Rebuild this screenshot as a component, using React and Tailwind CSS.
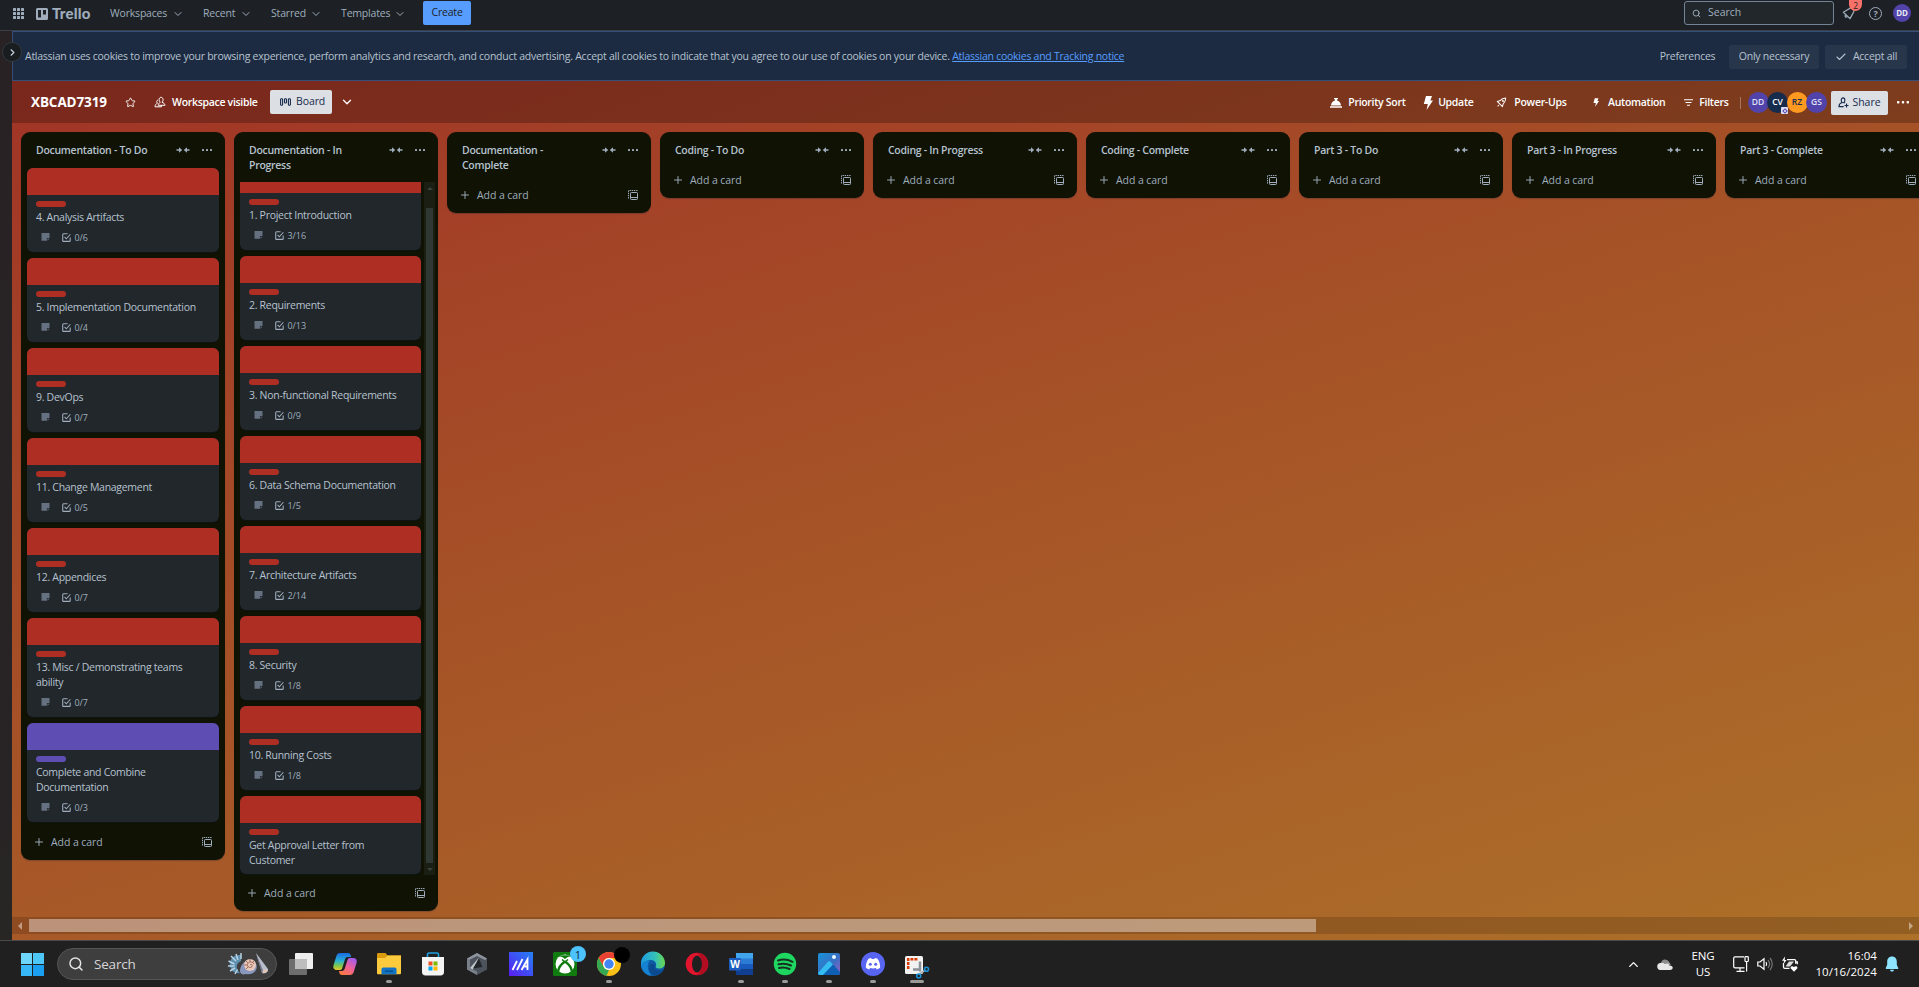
import React from "react";
import { ChevronDown, ChevronRight, ChevronUp, Search, Star, Plus, Check } from "lucide-react";

const LISTS = [
  {
    title: "Documentation - To Do",
    cards: [
      { title: "4. Analysis Artifacts", checks: "0/6" },
      { title: "5. Implementation Documentation", checks: "0/4" },
      { title: "9. DevOps", checks: "0/7" },
      { title: "11. Change Management", checks: "0/5" },
      { title: "12. Appendices", checks: "0/7" },
      { title: "13. Misc / Demonstrating teams ability", checks: "0/7" },
      { title: "Complete and Combine Documentation", checks: "0/3", purple: true },
    ],
  },
  {
    title: "Documentation - In Progress",
    scroll: true,
    cards: [
      { title: "1. Project Introduction", checks: "3/16" },
      { title: "2. Requirements", checks: "0/13" },
      { title: "3. Non-functional Requirements", checks: "0/9" },
      { title: "6. Data Schema Documentation", checks: "1/5" },
      { title: "7. Architecture Artifacts", checks: "2/14" },
      { title: "8. Security", checks: "1/8" },
      { title: "10. Running Costs", checks: "1/8" },
      { title: "Get Approval Letter from Customer" },
    ],
  },
  { title: "Documentation - Complete" },
  { title: "Coding - To Do" },
  { title: "Coding - In Progress" },
  { title: "Coding - Complete" },
  { title: "Part 3 - To Do" },
  { title: "Part 3 - In Progress" },
  { title: "Part 3 - Complete" },
];

/* ---------- small icons ---------- */

const CollapseIcon = () => (
  <svg viewBox="0 0 14 8" className="h-2 w-3.5 shrink-0" fill="none" stroke="currentColor" strokeWidth="1.4">
    <path d="M0.5 4H5M9 4h4.5" />
    <path d="M3 1.3 6.2 4 3 6.7ZM11 1.3 7.8 4 11 6.7Z" fill="currentColor" stroke="none" />
  </svg>
);

const Dots = ({ className }) => (
  <svg viewBox="0 0 10 2" className={className} fill="currentColor">
    <rect x="0" y="0" width="2" height="2" rx="0.6" />
    <rect x="4" y="0" width="2" height="2" rx="0.6" />
    <rect x="8" y="0" width="2" height="2" rx="0.6" />
  </svg>
);

const TemplateIcon = () => (
  <svg viewBox="0 0 10 10" className="size-2.5 shrink-0" fill="none" stroke="currentColor">
    <path d="M0.5 0.5v8.5M1.5 0.5h8" strokeDasharray="1.4 0.8" strokeWidth="1" />
    <rect x="2.5" y="2.5" width="7" height="7" rx="0.8" strokeWidth="1" />
    <path d="M3 7.5h6" strokeWidth="1" />
  </svg>
);

const ChecklistIcon = () => (
  <svg viewBox="0 0 10 10" className="size-[9px] shrink-0" fill="none" stroke="currentColor" strokeWidth="1.2">
    <path d="M6.2 0.9H1.6a.8.8 0 0 0-.8.8v6.8a.8.8 0 0 0 .8.8h6.7a.8.8 0 0 0 .8-.8V5" />
    <path d="M2.8 4.3 4.8 6.4 9.3 1.4" />
  </svg>
);

const DescriptionIcon = () => (
  <svg viewBox="0 0 10 9" className="h-[8px] w-[9px] shrink-0 text-[#657180]" fill="currentColor">
    <path d="M0.5 0h9v5.6H6.6V8.6H0.5Z" />
    <path d="M7.3 6.4h2.2L7.3 8.6Z" />
  </svg>
);

const RocketIcon = ({ className }) => (
  <svg viewBox="0 0 12 12" className={className} fill="none" stroke="currentColor" strokeWidth="1.1" strokeLinejoin="round">
    <path d="M10.6 1.2C8 1.3 5.6 2.6 4.1 4.2L1.3 4.8 7 10.6l.8-2.9c1.6-1.5 2.8-3.9 2.8-6.5Z" />
    <path d="M3.2 8.7 1.8 10.2" />
    <circle cx="7.6" cy="4.3" r="0.5" />
  </svg>
);

const BellIcon = () => (
  <svg viewBox="0 0 14 14" className="size-3.5" fill="none" stroke="currentColor" strokeWidth="1.3" strokeLinejoin="round">
    <path d="M1.4 6.3 8 2.2c2-1 4.6 1.4 3.8 3.6L8 12.6Z" />
    <path d="M3.7 8.6c-1.6 1.8.3 3.4 1.8 1.8" />
  </svg>
);

const BoltIcon = ({ className }) => (
  <svg viewBox="0 0 10 14" className={className} fill="currentColor">
    <path d="M3 0H9L7.4 4.6H10L3.6 14 4.8 8H0.8Z" />
  </svg>
);

const PeopleIcon = ({ className }) => (
  <svg viewBox="0 0 12 12" className={className} fill="none" stroke="currentColor" strokeWidth="1" strokeLinejoin="round">
    <path d="M7 1.300c2.600 0 2.600 4 .9 4.900C9.800 6.900 10.800 7.800 11 9.300H4.200c.2-1.500.9-2.400 2.100-3.100C4.600 5.200 4.600 1.300 7 1.300Z" />
    <path d="M3.800 4C2.400 4.500 2.500 6.500 3.500 7.200 1.900 7.800 1 9 1 10.800h6.500V9.500" />
  </svg>
);

const ShareIcon = () => (
  <svg viewBox="0 0 12 12" className="size-[11px]" fill="none" stroke="currentColor" strokeWidth="1.200">
    <ellipse cx="5.500" cy="3.600" rx="2" ry="2.600" />
    <path d="M4.400 6C2 6.800 1 8.200 1 10.500h5.200M6.600 6l1 .6M9.300 7v4.400M7.100 9.200h4.400" />
  </svg>
);

/* ---------- top navigation ---------- */

const NavItem = ({ label, className }) => (
  <button className={`flex shrink-0 items-center justify-between ${className}`}>
    <span>{label}</span>
    <ChevronDown className="size-3" strokeWidth={2} />
  </button>
);

function TopNav() {
  return (
    <header className="flex h-[31px] shrink-0 items-start border-b border-[#3a4046] bg-[#1d2125] text-[10.500px] font-medium tracking-[-0.200px] text-[#9fadbc]">
      <div className="flex h-[27px] flex-1 items-center pl-[13px]">
        <div className="grid grid-cols-3 gap-[1.500px]">
          {Array.from({ length: 9 }, (_, i) => (
            <i key={i} className="size-[2.700px] rounded-[0.500px] bg-[#9fadbc]" />
          ))}
        </div>
        <div className="ml-3 flex w-[74px] items-center gap-1 font-['Lato']">
          <svg viewBox="0 0 12 12" className="size-3">
            <path fillRule="evenodd" fill="#9fadbc" d="M1.500 0h9A1.500 1.500 0 0 1 12 1.500v9a1.500 1.500 0 0 1-1.500 1.500h-9A1.500 1.500 0 0 1 0 10.500v-9A1.500 1.500 0 0 1 1.500 0ZM2 2v7.500h3V2ZM7 2v4.500h3V2Z" />
          </svg>
          <b className="text-[15px] leading-none font-black tracking-[0.200px]">Trello</b>
        </div>
        <NavItem label="Workspaces" className="w-[74px]" />
        <NavItem label="Recent" className="ml-[19px] w-[49px]" />
        <NavItem label="Starred" className="ml-[19px] w-[51px]" />
        <NavItem label="Templates" className="ml-[19px] w-[65px]" />
        <button className="ml-[17px] mt-[-1px] h-6 w-12 rounded-[2px] bg-[#579dff] text-[#1d2125]">Create</button>
      </div>
      <div className="mt-px flex h-6 w-[150px] items-center rounded-[3px] border border-[#738496] bg-[#22272b] pl-[7px]">
        <Search className="size-[9px]" strokeWidth={2.500} />
        <span className="ml-[7px] font-normal tracking-normal">Search</span>
      </div>
      <div className="relative ml-2 mt-[6px] size-3.5">
        <BellIcon />
        <span className="absolute -top-[6px] left-[7px] flex h-[11px] w-[13px] items-center justify-center rounded-b-full rounded-t-[5px] bg-[#f87168] text-[8.500px] leading-[10px] font-normal text-[#1d2125]">2</span>
      </div>
      <span className="ml-[13px] mt-[7px] flex size-[13px] items-center justify-center rounded-full border-[1.300px] border-[#9fadbc] text-[9px] font-bold">?</span>
      <span className="ml-[11px] mr-2 mt-1 flex size-[18px] items-center justify-center rounded-full bg-[#5243aa] text-[8px] font-bold text-[#e6e9f5]">DD</span>
    </header>
  );
}

/* ---------- cookie banner ---------- */

function CookieBanner() {
  return (
    <div className="flex h-[50px] shrink-0 items-center border border-r-0 border-[#34507a] bg-[#1c2b41] pl-3 pr-3 text-[10.500px] text-[#b6c2cf]">
      <p className="flex-1 pt-[2px] tracking-[-0.255px] whitespace-nowrap">
        Atlassian uses cookies to improve your browsing experience, perform analytics and research, and conduct advertising. Accept all cookies to indicate that you agree to our use of cookies on your device.{" "}
        <a className="text-[#579dff] underline">Atlassian cookies and Tracking notice</a>
      </p>
      <div className="flex items-center pt-px font-medium tracking-[-0.250px]">
        <button className="w-[57px] text-center">Preferences</button>
        <button className="ml-[13px] h-6 w-[90px] rounded-[2px] bg-[#28364c]">Only necessary</button>
        <button className="ml-1.5 flex h-6 w-[82px] items-center justify-center gap-[6px] rounded-[2px] bg-[#28364c]">
          <Check className="size-3" strokeWidth={2.200} />
          Accept all
        </button>
      </div>
    </div>
  );
}

/* ---------- board header ---------- */

const Member = ({ children, className }) => (
  <span className={`relative flex h-[21px] w-[21px] items-center justify-center rounded-full text-[8.500px] font-semibold ${className}`}>
    {children}
  </span>
);

const HeaderAction = ({ icon, label, className }) => (
  <button className={`flex shrink-0 items-center justify-between ${className}`}>
    {icon}
    <span>{label}</span>
  </button>
);

function BoardHeader() {
  return (
    <div className="flex h-[42px] shrink-0 items-center bg-black/24 pl-[19px] text-[10.500px] font-semibold tracking-[-0.300px] whitespace-nowrap text-white">
      <h1 className="w-[94px] text-[13.500px] font-bold tracking-[-0.100px]">XBCAD7319</h1>
      <Star className="size-[11px]" strokeWidth={2} />
      <PeopleIcon className="ml-[18px] mr-1.5 size-3" />
      <span className="w-[98px] pt-px">Workspace visible</span>
      <button className="flex h-6 w-[62px] items-center rounded-[2px] bg-[#dcdfe4] pl-2.5 font-normal tracking-[-0.100px] text-[#172b4d]">
        <svg viewBox="0 0 11 9" className="mr-[5px] h-[9px] w-[11px]" fill="none" stroke="currentColor" strokeWidth="1.100">
          <rect x="0.600" y="0.700" width="2" height="6.600" rx="0.800" />
          <rect x="4.500" y="0.700" width="2" height="4.300" rx="0.800" />
          <rect x="8.400" y="0.700" width="2" height="6.600" rx="0.800" />
        </svg>
        Board
      </button>
      <ChevronDown className="ml-[8px] size-3.5" strokeWidth={2.200} />

      <div className="flex flex-1 items-center justify-end pt-px">
        <HeaderAction
          label="Priority Sort"
          className="w-[76px]"
          icon={
            <svg viewBox="0 0 12 10" className="h-2.5 w-3" fill="currentColor">
              <path d="M0 8.200h12v1.600H0ZM1 7.400C1.200 4.200 3.200 2.600 5 2.400V1.200h-1V0h4v1.200H7v1.200c1.800.2 3.800 1.800 4 5Z" />
            </svg>
          }
        />
        <HeaderAction label="Update" className="ml-[17px] w-[51px]" icon={<BoltIcon className="h-3.5 w-2.5" />} />
        <HeaderAction label="Power-Ups" className="ml-[22px] w-[71px]" icon={<RocketIcon className="size-[11px]" />} />
        <HeaderAction label="Automation" className="ml-[26px] w-[73px]" icon={<BoltIcon className="h-[9px] w-1.5" />} />
        <HeaderAction
          label="Filters"
          className="ml-[18px] w-[45px]"
          icon={
            <svg viewBox="0 0 9 7" className="h-[7px] w-[9px]" stroke="currentColor" strokeWidth="1.100">
              <path d="M0 0.700h9M1.500 3.500h6M3 6.300h3" />
            </svg>
          }
        />
        <i className="ml-[11px] h-3 w-px bg-white/30" />
        <div className="ml-[7px] flex -space-x-[1.500px] tracking-normal">
          <Member className="bg-[#5243aa] text-[#dfe0f5]">DD</Member>
          <Member className="bg-[#172b4d] text-white">
            CV
            <i className="absolute -bottom-px right-0 grid size-[7px] place-items-center rounded-[1px] bg-[#dcdff5]">
              <i className="size-[4px] rotate-45 border border-[#5243aa]" />
            </i>
          </Member>
          <Member className="bg-[#ff991f] text-[#172b4d]">RZ</Member>
          <Member className="bg-[#5243aa] text-[#dfe0f5]">GS</Member>
        </div>
        <button className="ml-1 flex h-6 w-[57px] items-center justify-center gap-[3px] rounded-[2px] bg-[#dcdfe4] font-normal tracking-normal text-[#172b4d]">
          <ShareIcon />
          Share
        </button>
        <Dots className="ml-[9px] mr-[10px] h-[2.400px] w-3" />
      </div>
    </div>
  );
}

/* ---------- lists ---------- */

function Card({ title, checks, purple }) {
  const color = purple ? "bg-[#5e4db2]" : "bg-[#ae2e24]";
  return (
    <li className="shrink-0 overflow-hidden rounded-md bg-[#22272b] shadow-[0_1px_1px_#091e4240]">
      <div className={`h-[27px] ${color}`} />
      <div className="px-[9px] pt-1.5 pb-[3px]">
        <i className={`block h-1.5 w-[30px] rounded-full ${color}`} />
        <p className="mt-[3px] mb-[3px] tracking-[-0.290px] text-[#b6c2cf]">{title}</p>
        {checks && (
          <div className="mb-[3px] flex h-[18px] items-center pl-[4.500px] text-[9px] tracking-[-0.050px] text-[#9fadbc]">
            <DescriptionIcon />
            <span className="ml-3 mr-1 flex"><ChecklistIcon /></span>
            <span>{checks}</span>
          </div>
        )}
      </div>
    </li>
  );
}

function List({ title, cards, scroll }) {
  return (
    <section className="w-[204px] shrink-0 rounded-[9px] bg-[#101204] text-[10.500px] leading-[15px] shadow-[0_1px_1px_#091e4240]">
      <div className="flex items-start pl-[15px] pt-[11px] pb-1 text-[#9fadbc]">
        <h2 className="w-[120px] font-semibold tracking-[-0.280px] text-[#b6c2cf]">{title}</h2>
        <span className="ml-[20px] mt-[3px]"><CollapseIcon /></span>
        <span className="ml-[12px] mt-[6px]"><Dots className="h-[2px] w-[10px]" /></span>
      </div>
      {cards && !scroll && (
        <ul className="flex flex-col gap-1.5 px-1.5 pt-1.5 pb-[2px]">
          {cards.map((c) => <Card key={c.title} {...c} />)}
        </ul>
      )}
      {cards && scroll && (
        <div className="mt-[5px] flex h-[693px] pl-1.5">
          <div className="flex w-[181px] flex-col justify-end overflow-hidden pb-px">
            <ul className="flex flex-col gap-1.5">
              {cards.map((c) => <Card key={c.title} {...c} />)}
            </ul>
          </div>
          <div className="ml-[3px] flex h-[693px] w-[11px] flex-col items-center justify-between bg-[#1b1e12] pt-[5px] pb-1 text-[#39423c]">
            <i className="h-0 w-0 border-x-[3px] border-b-[3px] border-x-transparent border-b-current" />
            <i className="mt-[18px] mb-[5px] w-[7px] flex-1 bg-[#303833]" />
            <i className="h-0 w-0 border-x-[3px] border-t-[3px] border-x-transparent border-t-current" />
          </div>
        </div>
      )}
      <div className="flex h-9 items-center pl-3 text-[#9fadbc]">
        <Plus className="size-3" strokeWidth={1.900} />
        <span className="ml-1.5 flex-1 font-medium tracking-[-0.080px]">Add a card</span>
        <span className="mr-[13px]"><TemplateIcon /></span>
      </div>
    </section>
  );
}

/* ---------- taskbar ---------- */

const TaskIcon = ({ children, running, active }) => (
  <div className="relative flex h-full w-11 shrink-0 items-center justify-center">
    {children}
    {running && <i className={`absolute bottom-1 h-[3px] rounded-full bg-[#9a9a9a] ${active ? "w-3.5" : "w-1.5"}`} />}
  </div>
);

const Svg = ({ children, box = "0 0 24 24" }) => <svg viewBox={box} className="size-6 overflow-visible">{children}</svg>;

function Seashells() {
  return (
    <svg viewBox="0 0 42 24" className="h-6 w-[42px]">
      <path d="M14 3C5 2 2 9 3 14s5 8 10 7c-4-4-5-9 1-12Z" fill="#5d8fb0" />
      <path d="M4 4 9 9M1.500 9l6 3M1 14l6.500 0M3 19l5-3M8 22l2.500-4.500M9 2l2 6M14 1v6" stroke="#b9d3e2" strokeWidth="1.500" />
      <path d="M13 19c0-5 4-11 10-11s8 6 6 10-7 5-10 4c-3 1-6 0-6-3Z" fill="#8a97bd" />
      <circle cx="23" cy="13" r="6" fill="#e6c9bb" />
      <path d="M23 13c1-1.500 3 0 2 1.500-1.500 2-5 .5-4.500-2 .6-3 5-3.500 6.500-.5" fill="none" stroke="#a0624f" strokeWidth="1" />
      <path d="M23 7v3M17 13h3M19 9l2 2M27 9l-2 2M19 17l2-2" stroke="#a0624f" strokeWidth="0.900" />
      <path d="M29 1 41 17c.5 3-3 5.500-6 4Z" fill="#b8bccb" />
      <path d="M29 1 37 21l-2 .5Z" fill="#6e7488" />
      <ellipse cx="38" cy="19" rx="2.800" ry="1.700" transform="rotate(-25 38 19)" fill="#dfc7b8" />
    </svg>
  );
}

function Taskbar() {
  return (
    <footer className="flex h-[47px] shrink-0 items-center border-t border-[#4a4a4a] bg-[#202020] font-['Open_Sans',sans-serif] text-white">
      <div className="ml-[21px] grid grid-cols-2 gap-px">
        <i className="size-[11px] bg-[#6fd6fb]" />
        <i className="size-[11px] bg-[#4cc7f8]" />
        <i className="size-[11px] bg-[#37b7f6]" />
        <i className="size-[11px] bg-[#1a9ff0]" />
      </div>
      <div className="ml-[13px] flex h-8 w-[220px] items-center rounded-full border border-[#555] bg-[#3e3e3e] pl-[10px] pr-[7px]">
        <Search className="size-4 text-[#e4e4e4]" strokeWidth={2.200} />
        <span className="ml-[10px] flex-1 text-[13.500px] tracking-[-0.200px] text-[#d6d6d6]">Search</span>
        <Seashells />
      </div>
      <div className="ml-[2px] flex h-full">
        <TaskIcon>
          <Svg>
            <rect x="6" y="1" width="18" height="16" rx="1" fill="#efefef" />
            <rect x="0" y="7" width="18" height="16" rx="1" fill="#6d6d6d" />
            <path d="M6 7h12v10H6Z" fill="#bdbdbd" />
          </Svg>
        </TaskIcon>
        <TaskIcon>
          <Svg>
            <defs>
              <linearGradient id="cpa" x1="0" y1="0" x2="0" y2="1">
                <stop offset="0" stopColor="#1a6be0" /><stop offset="0.450" stopColor="#27b0d8" /><stop offset="0.750" stopColor="#7cc84a" /><stop offset="1" stopColor="#e8c62f" />
              </linearGradient>
              <linearGradient id="cpb" x1="0.800" y1="0" x2="0.200" y2="1">
                <stop offset="0" stopColor="#a05cf0" /><stop offset="0.500" stopColor="#f0609a" /><stop offset="1" stopColor="#fb7a3c" />
              </linearGradient>
            </defs>
            <path d="M7 1h8c2 0 2.600 1.400 3.200 4h-3.500c-1.700 0-2.300 1-2.800 2.600L9.300 16c-.5 1.500-1.300 2-2.800 2H4C.500 18-.200 15.500.600 13L3.400 4C4 2 5 1 7 1Z" fill="url(#cpa)" />
            <path d="M17 23H9c-1.600 0-2.600-1-3-4h3c1.500 0 2.300-.8 2.800-2.400l2.600-8.400c.5-1.600 1.300-2.200 2.800-2.200H20c3.500 0 4.300 2.500 3.500 5l-2.800 9c-.6 2-1.800 3-3.700 3Z" fill="url(#cpb)" />
          </Svg>
        </TaskIcon>
        <TaskIcon running>
          <Svg>
            <path d="M0 2.500C0 1.500.500 1 1.500 1h7l2 2.500H24V12H0Z" fill="#d99a0b" />
            <path d="M0 6h8l2.500-2.500H24V21c0 .8-.6 1.300-1.300 1.300H1.300C.500 22.300 0 21.800 0 21Z" fill="#fcca3d" />
            <path d="M4.500 22.300V17.500c0-1.200.7-2 1.800-2h11.400c1.100 0 1.800.8 1.800 2v4.800Z" fill="#1273c4" />
            <path d="M8 19.200h8" stroke="#0a4f93" strokeWidth="1.500" />
          </Svg>
        </TaskIcon>
        <TaskIcon>
          <Svg>
            <path d="M6.500 6V2.500c0-1 .5-1.500 1.500-1.500h8c1 0 1.500.5 1.500 1.500V6" fill="none" stroke="#1f9fe0" strokeWidth="1.600" />
            <path d="M1 5h22v15c0 2-1.200 3.500-3.500 3.500h-15C2.200 23.500 1 22 1 20Z" fill="#f4f4f4" />
            <path d="M7.500 9.500h4v4h-4Z" fill="#f25022" /><path d="M12.500 9.500h4v4h-4Z" fill="#7fba00" />
            <path d="M7.500 14.500h4v4h-4Z" fill="#00a4ef" /><path d="M12.500 14.500h4v4h-4Z" fill="#ffb900" />
          </Svg>
        </TaskIcon>
        <TaskIcon>
          <Svg>
            <path d="M12 1 22 6.500v11L12 23 2 17.500v-11Z" fill="#4d535c" />
            <path d="M12 1 22 6.500 20 8 12 4 4 8 2 6.500Z" fill="#8d949d" />
            <path d="M2 6.500 5 8.500V16L12 19.500V23L2 17.500Z" fill="#79808a" />
            <path d="M14 5.500 5 16l3 1.500Z" fill="#c3c8cd" />
            <path d="M14 6.500 17.500 15 8 16.500Z" fill="#23272c" />
          </Svg>
        </TaskIcon>
        <TaskIcon>
          <Svg>
            <defs>
              <linearGradient id="asus" x1="0" y1="1" x2="1" y2="0">
                <stop offset="0" stopColor="#5a1cf0" /><stop offset="1" stopColor="#2383f5" />
              </linearGradient>
            </defs>
            <path d="M0 0h24v24H0Z" fill="url(#asus)" />
            <path d="M3.500 18 8 9M8 18l5.500-11M12.500 18 18.500 7.500V18M15.500 14.500h3" fill="none" stroke="#fff" strokeWidth="1.800" />
          </Svg>
        </TaskIcon>
        <TaskIcon>
          <Svg>
            <rect width="24" height="24" rx="1.500" fill="#107c10" />
            <circle cx="12" cy="12" r="9.500" fill="#fff" />
            <path d="M5.500 4.500C8 4 10.500 5.500 12 7c1.500-1.500 4-3 6.500-2.500C16.500 2.800 7.500 2.800 5.500 4.500Z" fill="#107c10" />
            <path d="M12 9.500C8.500 12 5.500 16 5.200 19.200M12 9.500c3.500 2.500 6.500 6.500 6.800 9.700" fill="none" stroke="#107c10" strokeWidth="2.400" />
            <path d="M9 7.500 12 10l3-2.500" fill="none" stroke="#107c10" strokeWidth="1.600" />
          </Svg>
          <span className="absolute top-[5px] left-[27px] flex size-[16px] items-center justify-center rounded-full bg-[#4cc2ff] text-[11px] leading-none text-[#112233]">1</span>
        </TaskIcon>
        <TaskIcon running>
          <Svg>
            <circle cx="12" cy="12" r="12" fill="#fbc116" />
            <path d="M1.600 6A12 12 0 0 1 22.400 6H12a6 6 0 0 0-5.200 9Z" fill="#e94235" />
            <path d="M1.600 6 6.800 15A6 6 0 0 0 12 18l-2.500 5.800A12 12 0 0 1 1.600 6Z" fill="#34a853" />
            <circle cx="12" cy="12" r="6" fill="#fff" /><circle cx="12" cy="12" r="4.700" fill="#4285f4" />
          </Svg>
          <i className="absolute top-[6px] left-[27px] size-[16px] rounded-full bg-black" />
        </TaskIcon>
        <TaskIcon>
          <Svg>
            <defs>
              <linearGradient id="edge" x1="0" y1="0.300" x2="1" y2="0.300">
                <stop offset="0" stopColor="#1d9be0" /><stop offset="0.600" stopColor="#35c1b8" /><stop offset="1" stopColor="#6bd84a" />
              </linearGradient>
            </defs>
            <circle cx="12" cy="12" r="12" fill="#0d59a4" />
            <path d="M0 12a12 12 0 0 1 24-1c0 3.500-2.500 5.500-6 5.500-2.500 0-4-1-3-2.500C16 11 13.500 8 10 8 5 8 1 11 0 15Z" fill="url(#edge)" />
            <path d="M0 13C1 10 5 8 8.500 9 6 12 6 18 10.500 23.800 4.500 23.500 0 18 0 13Z" fill="#1583d2" />
            <path d="M14 16.500c2 2.500 6 2.500 8.500 1.200C20.500 22 15 24.500 11 22c-4-2.500-3.500-7.500-1-10 1.500-1 4 .5 4.200 2-.7 1-.7 1.800-.2 2.500Z" fill="#0c4a8f" />
          </Svg>
        </TaskIcon>
        <TaskIcon>
          <Svg>
            <circle cx="12" cy="12" r="11.300" fill="#e3142d" />
            <path d="M12 1a11 11 0 0 1 0 22c3-1.500 5-5.500 5-11S15 2.500 12 1Z" fill="#b00c22" />
            <ellipse cx="12" cy="12" rx="5" ry="8.600" fill="#202020" />
          </Svg>
        </TaskIcon>
        <TaskIcon running>
          <Svg>
            <path d="M7 1h17v6H7Z" fill="#41a5ee" /><path d="M7 6.500h17V12H7Z" fill="#2b7cd3" />
            <path d="M7 12h17v5.500H7Z" fill="#185abd" /><path d="M7 17.500h17V23H7Z" fill="#103f91" />
            <rect x="0" y="6" width="12" height="12.500" rx="1" fill="#1b5cbe" />
            <text x="6" y="16" textAnchor="middle" fontSize="10" fontWeight="700" fill="#fff">W</text>
          </Svg>
        </TaskIcon>
        <TaskIcon running>
          <Svg>
            <circle cx="12" cy="12" r="11.200" fill="#1ed760" />
            <path d="M5 8.500c5-1.500 10-1 14.500 1.300M5.500 12.300c4.500-1.200 8.500-.8 12.500 1.200M6 16c3.800-1 7.200-.6 10.500 1" fill="none" stroke="#17301f" strokeWidth="2" strokeLinecap="round" />
          </Svg>
        </TaskIcon>
        <TaskIcon running>
          <Svg>
            <defs>
              <linearGradient id="photos" x1="0" y1="0" x2="1" y2="1">
                <stop offset="0" stopColor="#1793d8" /><stop offset="0.550" stopColor="#3a6fc4" /><stop offset="1" stopColor="#9a5fc0" />
              </linearGradient>
            </defs>
            <rect x="1" y="1" width="22" height="22" rx="2" fill="url(#photos)" />
            <path d="m1 21 9.500-11c1-1.200 2.300-1.200 3.300 0L23 20v1c0 1.300-.7 2-2 2H3c-1.300 0-2-.7-2-2Z" fill="#0f5fb4" />
            <path d="m1 21 9.500-11c1-1.200 2.300-1.200 3.300 0L16 12.500 6 23H3c-1.300 0-2-.7-2-2Z" fill="#35bdf2" />
            <circle cx="17" cy="5" r="2" fill="#eafaff" />
          </Svg>
        </TaskIcon>
        <TaskIcon running>
          <Svg>
            <circle cx="12" cy="12" r="12" fill="#5865f2" />
            <path d="M7.500 6.800c1-.4 1.800-.6 2.700-.7l.4.900c1-.1 1.900-.1 2.800 0l.4-.9c.9.1 1.700.3 2.700.7 1.900 2.700 2.800 5.700 2.600 9-1 .8-2.100 1.300-3.300 1.700l-.9-1.400c-1.900.6-3.900.6-5.800 0l-.9 1.400c-1.200-.4-2.300-.9-3.300-1.700-.2-3.300.7-6.300 2.600-9Z" fill="#fff" />
            <circle cx="9.300" cy="12.300" r="1.500" fill="#5865f2" /><circle cx="14.700" cy="12.300" r="1.500" fill="#5865f2" />
          </Svg>
        </TaskIcon>
        <TaskIcon running active>
          <Svg>
            <rect x="0" y="4" width="18" height="18" rx="1.500" fill="#f2f2f2" />
            <path d="M3.200 17V7.200h10" fill="none" stroke="#d83b01" strokeWidth="2.500" strokeDasharray="3 1" />
            <path d="M15 9.500v10M8 17.500h7" stroke="#8b9199" strokeWidth="2.500" fill="none" />
            <path d="m14.500 22 6-4" stroke="#a7adb4" strokeWidth="1.600" />
            <circle cx="21.500" cy="17.300" r="2" fill="none" stroke="#1b93d9" strokeWidth="1.600" />
            <circle cx="13.700" cy="24" r="2" fill="none" stroke="#1b93d9" strokeWidth="1.600" />
          </Svg>
        </TaskIcon>
      </div>

      <div className="flex flex-1 items-center justify-end text-[11.500px] leading-4 tracking-[-0.300px]">
        <ChevronUp className="size-[15px]" strokeWidth={2.200} />
        <svg viewBox="0 0 16 11" className="ml-4 h-[11px] w-4">
          <path d="M5 5a4 4 0 0 1 7-2l2 3Z" fill="#9b9b9b" />
          <path d="M4 11a3.500 3.500 0 0 1-.5-7C5 3 7 4 8 5c2-1 4 0 4.500 1.500C17 6.500 16.500 11 13 11Z" fill="#e8e8e8" />
          <path d="M4 4C5-.500 10-.500 12 3L8 5C7 4 5.500 3.500 4 4Z" fill="#8c8c8c" />
        </svg>
        <div className="ml-[14px] w-[32px] text-center tracking-[-0.100px]">ENG<br />US</div>
        <svg viewBox="0 0 16 16" className="ml-[14px] size-4" fill="none" stroke="#fff" strokeWidth="1.200">
          <path d="M11 0.800H2A1.300 1.300 0 0 0 .700 2v8.500A1.300 1.300 0 0 0 2 11.800h9.500M7 12v3M3.500 15.300h8" />
          <rect x="12" y="0.700" width="3.300" height="4.800" rx="0.800" /><path d="M13.600 5.500v10" />
        </svg>
        <svg viewBox="0 0 16 14" className="ml-2 h-3.5 w-4" fill="none" stroke="#fff" strokeWidth="1.200">
          <path d="M.800 5v4H3l4 3.300V1.700L3 5Z" /><path d="M9 5c.8 1.200.8 2.800 0 4" />
          <path d="M11 3c2 2.500 2 5.500 0 8M13 1c3 3.500 3 8.500 0 12" stroke="#777" />
        </svg>
        <svg viewBox="0 0 17 16" className="ml-2 h-4 w-[17px]" fill="none" stroke="#fff" strokeWidth="1.300">
          <path d="M6 3.600h7.500c.8 0 1.200.5 1.200 1.200v3M2.500 7v4c0 .8.500 1.300 1.300 1.300H8.500M15 5.800h1.300v2.500" />
          <path d="M4 .5 1 4.800h2L2.500 8 5.600 4H3.700Z" fill="#fff" stroke="none" />
          <path d="M4.500 10.500 8 5.500h5L9 10.500Z" fill="#ddd" stroke="none" />
          <path d="M13 15.800 9.800 12.400c-1-1.600 1.400-3.300 3.200-1.400 1.800-1.900 4.200-.2 3.200 1.400Z" fill="#fff" stroke="none" />
        </svg>
        <div className="ml-[13px] w-[66px] text-right whitespace-nowrap tracking-[0.050px]">16:04<br />10/16/2024</div>
        <svg viewBox="0 0 14 16" className="ml-2 mr-5 h-4 w-3.5" fill="#8ee5ff">
          <path d="M7 .500c3 0 4.800 2.200 4.800 5v3.300l1.500 3.200c.2.500 0 .9-.6.9H1.300c-.6 0-.8-.4-.6-.9l1.500-3.200V5.500c0-2.800 1.800-5 4.800-5ZM5 13.700h4c-.3 1.300-1 1.800-2 1.800s-1.700-.5-2-1.800Z" />
        </svg>
      </div>
    </footer>
  );
}

export default function App() {
  return (
    <div className="flex h-[987px] w-[1919px] flex-col overflow-hidden bg-[linear-gradient(162deg,#a03026_0%,#a33f27_21%,#a65427_50%,#ad7229_100%)] font-['Open_Sans','Noto_Sans',sans-serif]">
      <TopNav />
      <div className="flex min-h-0 flex-1">
        <aside className="relative z-10 w-3 shrink-0 bg-[#1d2125]/92">
          <button className="absolute top-[11px] left-[2px] flex size-5 items-center justify-center rounded-full border border-[#33383d] bg-[#1a1d20] text-[#c7d1db]">
            <ChevronRight className="size-[11px]" strokeWidth={2.500} />
          </button>
        </aside>
        <main className="flex min-w-0 flex-1 flex-col">
          <CookieBanner />
          <BoardHeader />
          <div className="flex min-h-0 flex-1 items-start gap-[9px] overflow-hidden pt-[9px] pl-[9px]">
            {LISTS.map((list) => <List key={list.title} {...list} />)}
          </div>
          <div className="mb-1.5 flex h-[17px] shrink-0 items-center bg-black/15 px-[6px] text-white/45">
            <i className="h-0 w-0 border-y-[4px] border-r-[4px] border-y-transparent border-r-current" />
            <i className="ml-[7px] h-[13px] w-[1287px] bg-white/40" />
            <i className="ml-auto h-0 w-0 border-y-[4px] border-l-[4px] border-y-transparent border-l-current" />
          </div>
        </main>
      </div>
      <Taskbar />
    </div>
  );
}
